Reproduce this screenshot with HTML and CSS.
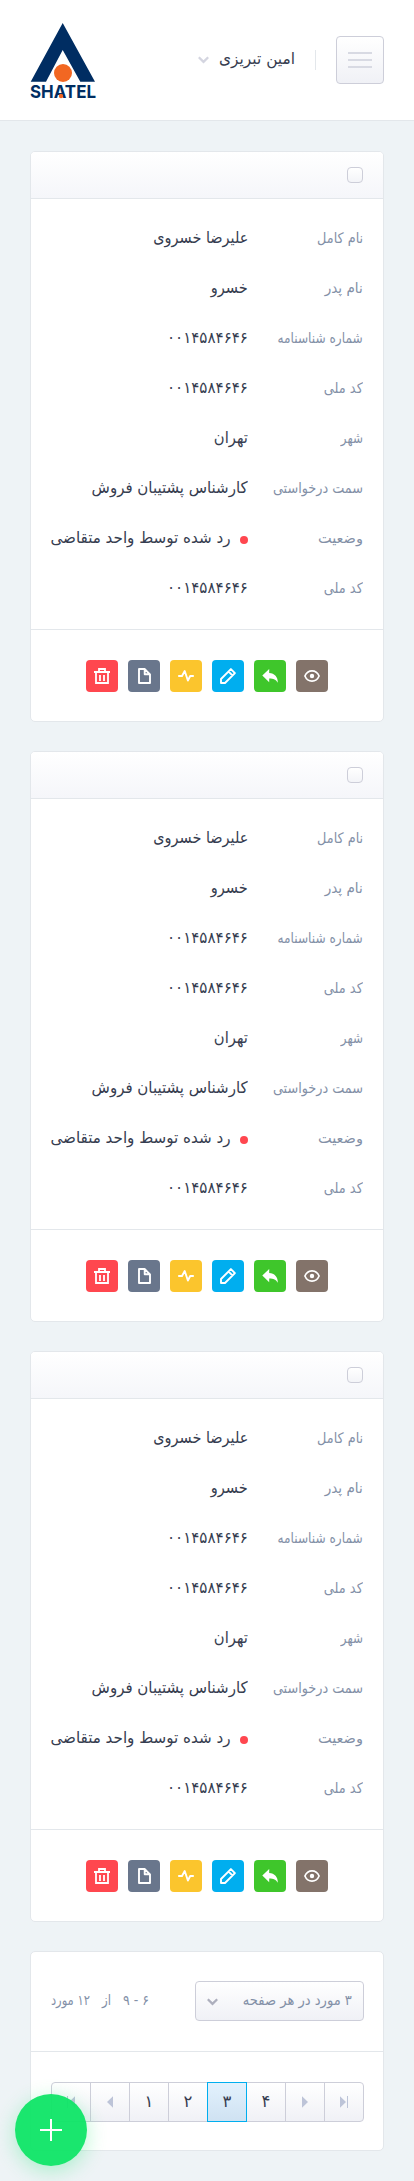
FILE: index.html
```html
<!DOCTYPE html>
<html lang="fa" dir="rtl">
<head>
<meta charset="utf-8">
<meta name="viewport" content="width=device-width, initial-scale=1">
<title>شاتل</title>
<link rel="stylesheet" href="styles.css">
</head>
<body>
<svg class="sprite" aria-hidden="true">
  <symbol id="chevron" viewBox="0 0 11 8"><path d="M.8 1.200l4.700 4.700 4.700-4.700" fill="none" stroke="currentColor" stroke-width="2.300"/></symbol>
  <symbol id="eye" viewBox="0 0 16 16"><path d="M.9 8C2.300 4.700 5 2.900 8 2.900s5.700 1.800 7.100 5.100C13.700 11.300 11 13.100 8 13.100S2.300 11.300 .9 8z" fill="none" stroke="currentColor" stroke-width="1.700"/><circle cx="8" cy="8" r="2.200" fill="currentColor"/></symbol>
  <symbol id="reply" viewBox="0 0 16 16"><path d="M.3 7.600L7.200 1v3.900c5.300.3 8.800 3.800 8.600 9.900-1.700-3.300-4.400-4.300-8.600-4.300v3.700z" fill="currentColor"/></symbol>
  <symbol id="edit" viewBox="0 0 16 16"><path d="M1 15v-4L10.900 1.100 14.900 5.100 5 15zM8.600 3.600l3.800 3.800" fill="none" stroke="currentColor" stroke-width="1.900" stroke-linejoin="round"/></symbol>
  <symbol id="pulse" viewBox="0 0 16 16"><path d="M.2 8H4l2.700-5L9.900 12.500 12.200 8h3.600" fill="none" stroke="currentColor" stroke-width="1.900" stroke-linejoin="round"/></symbol>
  <symbol id="file" viewBox="0 0 16 16"><path d="M3 1h5.600L14 6.400V15H3zM8.700 1v5.300H14" fill="none" stroke="currentColor" stroke-width="1.900" stroke-linejoin="round"/></symbol>
  <symbol id="trash" viewBox="0 0 16 16"><path d="M0 4h16M2 4v11h12V4M5 4V1h6v3M6 7v6M10 7v6" fill="none" stroke="currentColor" stroke-width="1.800"/></symbol>
  <symbol id="step" viewBox="0 0 6 12"><path d="M0 .3L6 6 0 11.700z" fill="currentColor"/></symbol>
  <symbol id="end" viewBox="0 0 8 12"><path d="M0 .3L6 6 0 11.700zM7 0h1v12H7z" fill="currentColor"/></symbol>
</svg>

<header class="topbar">
  <button class="menu" aria-label="منو"><i></i><i></i><i></i></button>
  <div class="user"><span class="user-name fit" data-width="76">امین تبریزی</span><svg class="chevron"><use href="#chevron"/></svg></div>
  <svg class="logo" viewBox="0 0 66 82" role="img" aria-label="SHATEL">
    <path d="M32.700 0L65 58.700H50.300L32.700 27 16 58.700H.7z" fill="#002d62"/>
    <circle cx="33" cy="50" r="9" fill="#f26722"/>
    <text class="wordmark" x="0" y="74.800" textLength="66" lengthAdjust="spacingAndGlyphs" direction="ltr">SHATEL</text>
    <circle cx="31" cy="73" r="2.200" fill="#f26722"/>
  </svg>
</header>

<main class="content" id="content">
  <section class="card pager">
    <div class="pager-info">
      <button class="select"><span class="fit" data-width="109">۳ مورد در هر صفحه</span><svg class="chevron"><use href="#chevron"/></svg></button>
      <div class="range"><span class="fit" data-width="26">۶ - ۹</span><span class="fit" data-width="9">از</span><span class="fit" data-width="39">۱۲ مورد</span></div>
    </div>
    <nav class="pages">
      <a class="page"><svg class="end"><use href="#end"/></svg></a>
      <a class="page"><svg class="step"><use href="#step"/></svg></a>
      <a class="page"><span>۴</span></a>
      <a class="page active"><span>۳</span></a>
      <a class="page"><span>۲</span></a>
      <a class="page"><span>۱</span></a>
      <a class="page"><svg class="step flip"><use href="#step"/></svg></a>
      <a class="page"><svg class="end flip"><use href="#end"/></svg></a>
    </nav>
  </section>
</main>
<button class="fab" aria-label="افزودن"></button>
<script src="app.js"></script>
</body>
</html>
```
FILE: styles.css
```css
* { box-sizing: border-box; }
body { margin: 0; min-height: 2181px; background: #eef3f6; color: #363d50; font: 14px/20px "DejaVu Sans", sans-serif; }
button { padding: 0; font: inherit; color: inherit; }
.sprite { display: none; }
.fit { display: block; flex: none; white-space: nowrap; transform-origin: right center; }
.topbar { height: 121px; padding: 23px 30px 0; display: flex; align-items: flex-start; background: #fff; border-bottom: 1px solid #e3e7eb; }
.menu { width: 48px; height: 48px; margin-top: 13px; display: flex; flex-direction: column; align-items: center; justify-content: center; gap: 5px; border: 1px solid #cdced9; border-radius: 4px; background: linear-gradient(#fff, #f0f1f6); }
.menu i { width: 24px; height: 2px; background: #d8dae3; }
.user { height: 20px; margin: 27px 20px 0 0; padding-right: 20px; border-right: 1px solid #e3e7eb; display: flex; align-items: center; gap: 10px; }
.user-name { font-size: 16px; padding-bottom: 2px; }
.chevron { width: 11px; height: 8px; color: #d4d5e0; }
.logo { width: 66px; height: 82px; margin-right: auto; overflow: visible; }
.wordmark { font: bold 18px Inter, "Liberation Sans", sans-serif; fill: #002d62; }
.content { padding: 30px; display: flex; flex-direction: column; gap: 29px; }
.card { background: #fff; border: 1px solid #e3e7eb; border-radius: 5px; overflow: hidden; }
.card-head { height: 47px; padding-right: 20px; display: flex; align-items: center; background: linear-gradient(#fff, #f5f6fa); border-bottom: 1px solid #e3e7eb; }
.check { width: 16px; height: 16px; border: 1px solid #cdced9; border-radius: 4px; background: linear-gradient(#fff, #f3f4f8); }
.fields { margin: 0; padding: 15px 20px; }
.field { height: 50px; padding-bottom: 2px; display: flex; align-items: center; white-space: nowrap; }
.field dt { width: 115px; flex: none; font-size: 14.5px; color: #8390a7; }
.field dd { margin: 0; display: flex; align-items: center; font-size: 16px; }
.dot { width: 8px; height: 8px; margin: 4px 0 0 10px; border-radius: 50%; background: #ff474f; }
.actions { height: 92px; padding-top: 30px; display: flex; justify-content: center; gap: 10px; border-top: 1px solid #e3e7eb; }
.action { width: 32px; height: 32px; display: grid; place-items: center; border: 0; border-radius: 4px; color: #fff; }
.action svg { width: 16px; height: 16px; }
.view { background: #83736a; }
.reply { background: #3fc62b; }
.edit { background: #00aeef; }
.pulse { background: #fbc52d; }
.file { background: #69768c; }
.trash { background: #ff474f; }
.pager { height: 200px; }
.pager-info { height: 100px; padding: 29px 19px 0 20px; display: flex; justify-content: space-between; border-bottom: 1px solid #e3e7eb; color: #8390a7; font-size: 14.5px; }
.select { width: 169px; height: 40px; padding: 0 11px 2px; display: flex; align-items: center; justify-content: space-between; border: 1px solid #cdced9; border-radius: 4px; background: linear-gradient(#fff, #f0f1f6); white-space: nowrap; }
.select .chevron { color: #adafbd; margin-top: 3px; }
.range { height: 38px; display: flex; align-items: center; gap: 12px; white-space: nowrap; }
.pages { margin: 30px 19px 0 20px; height: 40px; display: flex; border: 1px solid #cdced9; border-radius: 4px; background: linear-gradient(#fff, #f0f1f6); }
.page { width: 39px; flex: none; display: grid; place-items: center; font-size: 16.5px; }
.page:first-child { width: 38px; }
.page + .page { border-right: 1px solid #cdced9; }
.page svg { color: #bdc4d8; }
.pages .active { position: relative; width: 40px; margin: -1px 0 -1px -1px; border: 1px solid #00aeef; background: linear-gradient(#e2f1fd, #cfe2f2); }
.step { width: 6px; height: 12px; }
.end { width: 8px; height: 12px; }
.flip { transform: scaleX(-1); }
.fab { position: fixed; left: 15px; top: 2094px; width: 72px; height: 72px; border: 0; border-radius: 50%; background: linear-gradient(#fff, #fff) center / 22px 2px no-repeat, linear-gradient(#fff, #fff) center / 2px 22px no-repeat, rgba(14, 229, 102, .95); box-shadow: 0 5px 20px rgba(14, 229, 102, .3); }
```
FILE: app.js
```js
// label, label width, value, value width
const fields = [
  ["نام کامل", 46, "علیرضا خسروی", 95],
  ["نام پدر", 38, "خسرو", 37],
  ["شماره شناسنامه", 85, "۰۰۱۴۵۸۴۶۴۶", 81],
  ["کد ملی", 39, "۰۰۱۴۵۸۴۶۴۶", 81],
  ["شهر", 22, "تهران", 34],
  ["سمت درخواستی", 90, "کارشناس پشتیبان فروش", 156],
  ["وضعیت", 45, "رد شده توسط واحد متقاضی", 180],
  ["کد ملی", 39, "۰۰۱۴۵۸۴۶۴۶", 81]
];
const actions = [["view", "eye"], ["reply", "reply"], ["edit", "edit"], ["pulse", "pulse"], ["file", "file"], ["trash", "trash"]];

const rows = fields.map(([label, lw, value, vw]) => `
  <div class="field"><dt><span class="fit" data-width="${lw}">${label}</span></dt><dd>${label === "وضعیت" ? '<i class="dot"></i>' : ""}<span class="fit" data-width="${vw}">${value}</span></dd></div>`).join("");
const buttons = actions.map(([name, icon]) => `<button class="action ${name}"><svg><use href="#${icon}"/></svg></button>`).join("");
const card = `<article class="card"><div class="card-head"><span class="check"></span></div><dl class="fields">${rows}</dl><div class="actions">${buttons}</div></article>`;

document.getElementById("content").insertAdjacentHTML("afterbegin", card.repeat(3));

document.querySelectorAll(".fit").forEach(el => {
  const width = Number(el.dataset.width);
  const range = document.createRange();
  range.selectNodeContents(el);
  const natural = range.getBoundingClientRect().width;
  el.style.width = natural + "px";
  el.style.marginLeft = (width - natural) + "px";
  el.style.transform = `scaleX(${width / natural})`;
});
```
